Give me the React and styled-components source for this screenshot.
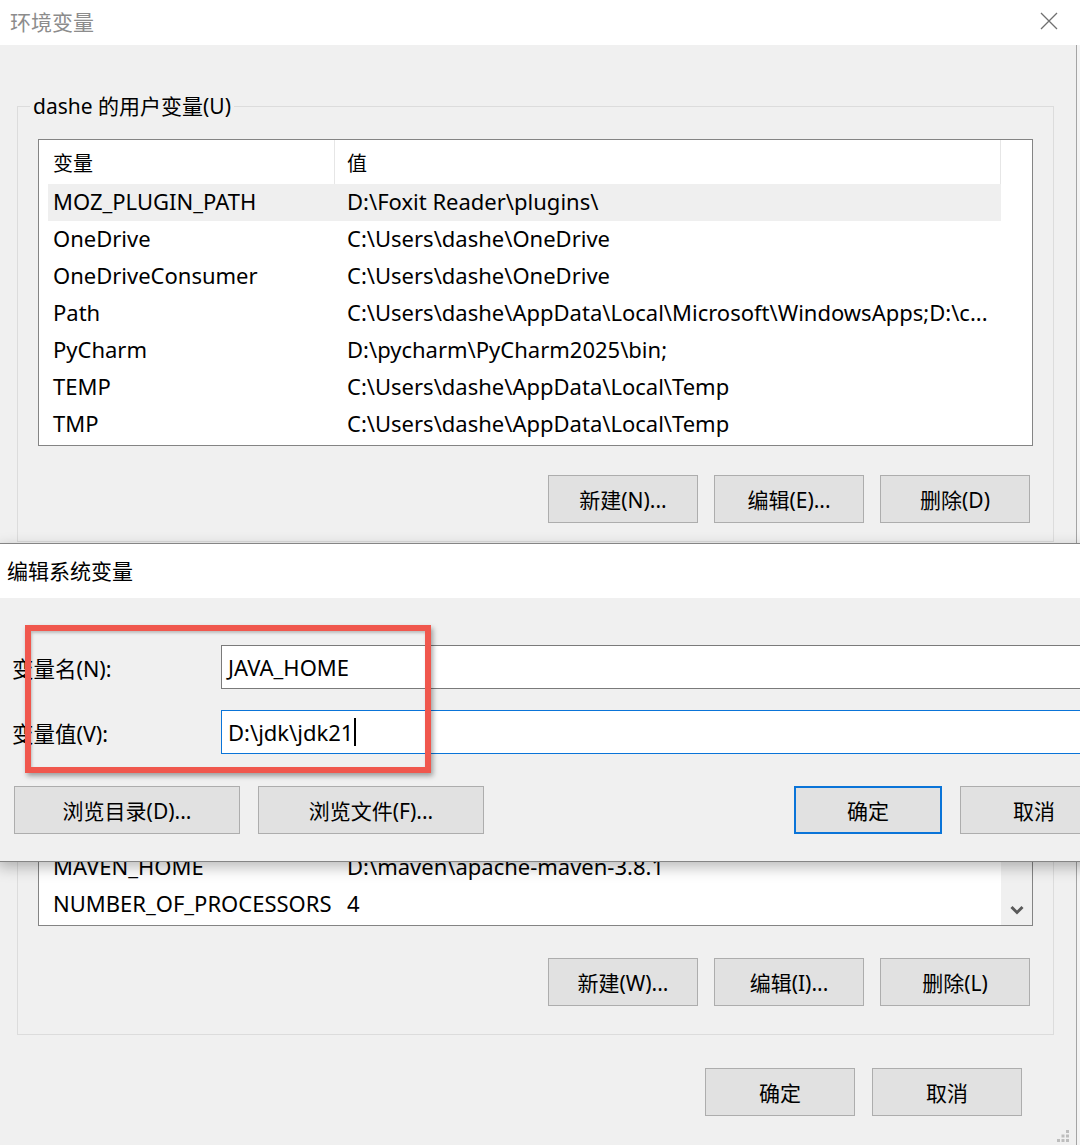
import React from 'react'
import styled, { createGlobalStyle } from 'styled-components'

const GlobalStyle = createGlobalStyle`
  html, body {
    margin: 0;
    padding: 0;
    height: 100%;
    overflow: hidden;
    background: #f4f4f4;
  }
  #root { height: 100%; }
  * { box-sizing: border-box; }
  body {
    font-family: "Noto Sans", "Noto Sans CJK SC", sans-serif;
    color: #000;
  }
`

const Desktop = styled.div`
  position: relative;
  width: 1080px;
  height: 1145px;
  overflow: hidden;
`

const Window = styled.div`
  display: flex;
  flex-direction: column;
  height: 100%;
`

const TitleBar = styled.div`
  height: 45px;
  flex-shrink: 0;
  background: #fff;
  display: flex;
  align-items: center;
  justify-content: space-between;
  padding: 0 22px 4px 10px;
`

const Title = styled.span`
  font-size: 21px;
  color: ${p => (p.$active ? '#000' : '#8c8c8c')};
`

const WinBody = styled.div`
  position: relative;
  flex: 1;
  background: #f0f0f0;
  margin-right: 3px;
  border-right: 1px solid #a4a4a4;
  padding: 49px 22px 0 17px;
  display: flex;
  flex-direction: column;
`

const Group = styled.fieldset`
  margin: ${p => p.$mt || 0}px 0 0 0;
  border: 1px solid #dcdcdc;
  padding: 21px 20px ${p => p.$pb}px 20px;
  min-width: 0;
`

const Legend = styled.legend`
  font-size: 21px;
  line-height: 24px;
  padding: 0 3px;
  margin-left: -8px;
`

const ListBox = styled.div`
  height: ${p => p.$h}px;
  border: 1px solid #848484;
  background: #fff;
  display: flex;
`

const ListMain = styled.div`
  flex: 1;
  display: flex;
  flex-direction: column;
  padding: 0 0 2px 9px;
  min-width: 0;
`

const Header = styled.div`
  height: 44px;
  flex-shrink: 0;
  display: flex;
`

const HeaderCell = styled.div`
  width: ${p => p.$w};
  flex: ${p => (p.$grow ? 1 : 'none')};
  padding-left: ${p => p.$pl}px;
  border-right: 1px solid #e6e6e6;
  display: flex;
  align-items: center;
  font-size: 20px;
`

const Rows = styled.div`
  flex: 1;
  display: flex;
  flex-direction: column;
  justify-content: ${p => (p.$bottom ? 'flex-end' : 'flex-start')};
  overflow: hidden;
`

const Row = styled.div`
  height: 37px;
  flex-shrink: 0;
  display: flex;
  align-items: center;
  padding-bottom: 3px;
  font-size: 22px;
  background: ${p => (p.$selected ? '#efefef' : 'transparent')};
  white-space: nowrap;
`

const NameCell = styled.div`
  width: 287px;
  flex-shrink: 0;
  padding-left: 5px;
  overflow: hidden;
`

const ValueCell = styled.div`
  flex: 1;
  padding-left: 12px;
  overflow: hidden;
`

const ScrollCol = styled.div`
  width: 31px;
  flex-shrink: 0;
  background: ${p => (p.$shown ? '#f0f0f0' : '#fff')};
  display: flex;
  flex-direction: column;
  justify-content: flex-end;
  align-items: center;
  padding-bottom: 10px;
`

const ButtonRow = styled.div`
  display: flex;
  justify-content: ${p => (p.$split ? 'flex-start' : 'flex-end')};
  gap: ${p => p.$gap || 16}px;
  margin-top: ${p => p.$mt}px;
  padding-right: ${p => p.$pr || 0}px;
  padding-left: ${p => p.$pl || 0}px;
`

const Button = styled.div`
  width: ${p => p.$w || 150}px;
  height: 48px;
  flex-shrink: 0;
  display: flex;
  align-items: center;
  justify-content: center;
  background: #e1e1e1;
  border: ${p => (p.$default ? '2px solid #0a74d8' : '1px solid #adadad')};
  font-size: 21px;
  margin-left: ${p => (p.$push ? 'auto' : '0')};
`

const Grip = styled.svg`
  position: absolute;
  right: 7px;
  bottom: 3px;
`

const Dialog = styled.div`
  position: absolute;
  left: -2px;
  top: 543px;
  width: 1124px;
  border: 1px solid #858585;
  background: #f0f0f0;
  box-shadow: 0 5px 14px rgba(0, 0, 0, 0.28);
  display: flex;
  flex-direction: column;
`

const DialogTitle = styled.div`
  height: 54px;
  background: #fff;
  display: flex;
  align-items: center;
  padding: 0 0 2px 8px;
`

const DialogBody = styled.div`
  padding: 47px 13px 27px 13px;
  display: flex;
  flex-direction: column;
`

const FieldRow = styled.div`
  display: flex;
  align-items: center;
  margin-top: ${p => p.$mt || 0}px;
`

const Label = styled.div`
  width: 209px;
  flex-shrink: 0;
  font-size: 21.5px;
`

const Input = styled.div`
  flex: 1;
  height: 44px;
  background: #fff;
  border: 1px solid ${p => (p.$focused ? '#0a74d8' : '#7a7a7a')};
  display: flex;
  align-items: center;
  padding-left: 6px;
  font-size: 22px;
`

const Caret = styled.span`
  display: inline-block;
  width: 2px;
  height: 28px;
  background: #000;
  margin-left: 1px;
`

const Highlight = styled.div`
  position: absolute;
  left: 26px;
  top: 81px;
  width: 406px;
  height: 148px;
  border: 6px solid #f0574d;
  box-shadow: 2px 3px 5px rgba(0, 0, 0, 0.35), inset 1px 2px 3px rgba(0, 0, 0, 0.22);
  pointer-events: none;
`

const userVars = [
  ['MOZ_PLUGIN_PATH', 'D:\\Foxit Reader\\plugins\\'],
  ['OneDrive', 'C:\\Users\\dashe\\OneDrive'],
  ['OneDriveConsumer', 'C:\\Users\\dashe\\OneDrive'],
  ['Path', 'C:\\Users\\dashe\\AppData\\Local\\Microsoft\\WindowsApps;D:\\c...'],
  ['PyCharm', 'D:\\pycharm\\PyCharm2025\\bin;'],
  ['TEMP', 'C:\\Users\\dashe\\AppData\\Local\\Temp'],
  ['TMP', 'C:\\Users\\dashe\\AppData\\Local\\Temp'],
]

const systemVars = [
  ['ANDROID_HOME', 'D:\\android\\sdk'],
  ['CLASSPATH', '.;%JAVA_HOME%\\lib'],
  ['ComSpec', 'C:\\Windows\\system32\\cmd.exe'],
  ['configsetroot', 'C:\\Windows\\ConfigSetRoot'],
  ['DriverData', 'C:\\Windows\\System32\\Drivers\\DriverData'],
  ['JAVA_HOME', 'D:\\jdk\\jdk21'],
  ['MAVEN_HOME', 'D:\\maven\\apache-maven-3.8.1'],
  ['NUMBER_OF_PROCESSORS', '4'],
]

function VarList({ vars, height, scrolled, selected }) {
  return (
    <ListBox $h={height}>
      <ListMain>
        <Header>
          <HeaderCell $w="287px" $pl={5}>变量</HeaderCell>
          <HeaderCell $grow $pl={12}>值</HeaderCell>
        </Header>
        <Rows $bottom={scrolled}>
          {vars.map(([name, value], i) => (
            <Row key={name} $selected={i === selected}>
              <NameCell>{name}</NameCell>
              <ValueCell>{value}</ValueCell>
            </Row>
          ))}
        </Rows>
      </ListMain>
      <ScrollCol $shown={scrolled}>
        {scrolled && (
          <svg width="14" height="10" viewBox="0 0 14 10">
            <path d="M1.5 2 L7 7.5 L12.5 2" fill="none" stroke="#5a5a5a" strokeWidth="3" />
          </svg>
        )}
      </ScrollCol>
    </ListBox>
  )
}

export default function App() {
  return (
    <Desktop>
      <GlobalStyle />
      <Window>
        <TitleBar>
          <Title>环境变量</Title>
          <svg width="18" height="18" viewBox="0 0 18 18">
            <path d="M1 1 L17 17 M17 1 L1 17" stroke="#707070" strokeWidth="1.3" />
          </svg>
        </TitleBar>
        <WinBody>
          <Group $pb={18}>
            <Legend>dashe 的用户变量(U)</Legend>
            <VarList vars={userVars} height={307} selected={0} />
            <ButtonRow $mt={29} $pr={3}>
              <Button>新建(N)...</Button>
              <Button>编辑(E)...</Button>
              <Button>删除(D)</Button>
            </ButtonRow>
          </Group>

          <Group $mt={13} $pb={28}>
            <Legend>系统变量(S)</Legend>
            <VarList vars={systemVars} height={326} scrolled />
            <ButtonRow $mt={32} $pr={3}>
              <Button>新建(W)...</Button>
              <Button>编辑(I)...</Button>
              <Button>删除(L)</Button>
            </ButtonRow>
          </Group>

          <ButtonRow $mt={33} $pr={32} $gap={17}>
            <Button>确定</Button>
            <Button>取消</Button>
          </ButtonRow>

          <Grip width="12" height="12" viewBox="0 0 12 12">
            <rect x="9" y="0" width="3" height="3" fill="#bdbdbd" />
            <rect x="4.5" y="4.5" width="3" height="3" fill="#bdbdbd" />
            <rect x="9" y="4.5" width="3" height="3" fill="#bdbdbd" />
            <rect x="0" y="9" width="3" height="3" fill="#bdbdbd" />
            <rect x="4.5" y="9" width="3" height="3" fill="#bdbdbd" />
            <rect x="9" y="9" width="3" height="3" fill="#bdbdbd" />
          </Grip>
        </WinBody>
      </Window>

      <Dialog>
        <DialogTitle>
          <Title $active>编辑系统变量</Title>
        </DialogTitle>
        <DialogBody>
          <FieldRow>
            <Label>变量名(N):</Label>
            <Input>JAVA_HOME</Input>
          </FieldRow>
          <FieldRow $mt={21}>
            <Label>变量值(V):</Label>
            <Input $focused>
              D:\jdk\jdk21<Caret />
            </Input>
          </FieldRow>
          <ButtonRow $mt={32} $gap={18} $pl={2} $split>
            <Button $w={226}>浏览目录(D)...</Button>
            <Button $w={226}>浏览文件(F)...</Button>
            <Button $w={148} $default $push>确定</Button>
            <Button $w={148}>取消</Button>
          </ButtonRow>
        </DialogBody>
        <Highlight />
      </Dialog>
    </Desktop>
  )
}
